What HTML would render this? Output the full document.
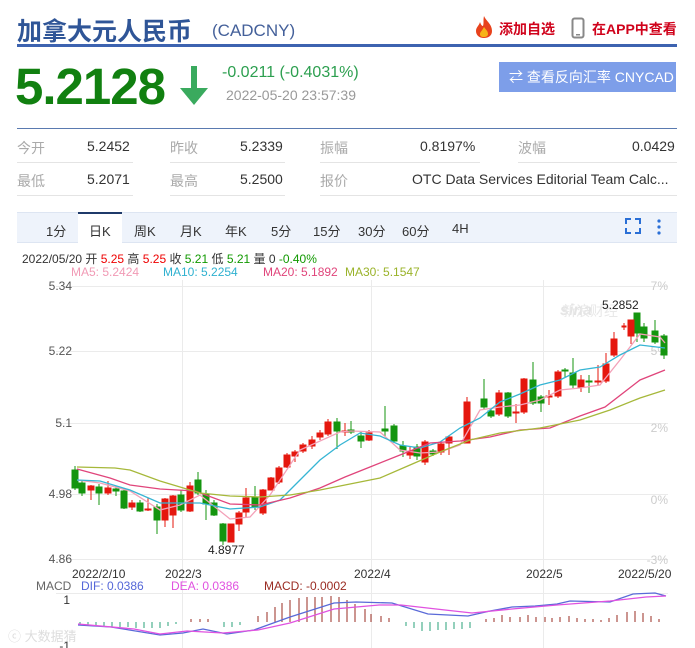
<!DOCTYPE html>
<html><head><meta charset="utf-8"><style>
*{margin:0;padding:0;box-sizing:border-box}
body{width:695px;height:648px;background:#fff;font-family:"Liberation Sans","Noto Sans CJK SC",sans-serif;position:relative;overflow:hidden;color:#333}
.a{position:absolute;white-space:nowrap}
.lb{color:#aaa;font-size:14px}
.v{color:#333;font-size:14px}
.ln{position:absolute;height:1px;background:#e4e4e4}
.tab{position:absolute;top:221px;font-size:13px;color:#333}
</style></head><body>
<div class="a" style="left:17px;top:12px;font-size:25px;font-weight:bold;color:#2f5597">加拿大元人民币</div>
<div class="a" style="left:212px;top:21px;font-size:17px;color:#44609a">(CADCNY)</div>
<svg class="a" style="left:473px;top:15px" width="22" height="24" viewBox="0 0 22 24"><path d="M11 1C13 6 19 9 19 16C19 21 15 23 11 23C6 23 3 20 3 16C3 12 6 11 7 7C8 10 9 11 10 11C11 8 10 5 11 1Z" fill="#e8421c"/><path d="M11 12C13 15 15 16 15 19C15 21 13 22 11 22C8 22 7 21 7 19C7 17 9 16 11 12Z" fill="#f7b318"/></svg>
<div class="a" style="left:499px;top:19px;font-size:14px;color:#d0021b;font-weight:bold">添加自选</div>
<svg class="a" style="left:571px;top:17px" width="14" height="22"><rect x="1.5" y="1.5" width="11" height="19" rx="2" fill="none" stroke="#888" stroke-width="2"/><rect x="5" y="17" width="4" height="1.5" fill="#888"/></svg>
<div class="a" style="left:592px;top:19px;font-size:14px;color:#d0021b;font-weight:bold">在APP中查看</div>
<div class="a" style="left:17px;top:44px;width:660px;height:3px;background:#3d63b0"></div>
<div class="a" style="left:15px;top:57px;font-size:51px;font-weight:bold;color:#118010;letter-spacing:-1px">5.2128</div>
<svg class="a" style="left:180px;top:66px" width="28" height="40"><rect x="11" y="0" width="6" height="26" fill="#3aaa5e"/><path d="M0 22L28 22L14 39Z" fill="#3aaa5e"/></svg>
<div class="a" style="left:222px;top:64px;font-size:16px;color:#2c9f4f">-0.0211 (-0.4031%)</div>
<div class="a" style="left:226px;top:87px;font-size:14px;color:#999">2022-05-20 23:57:39</div>
<div class="a" style="left:499px;top:62px;width:177px;height:30px;background:#7d9ee9;color:#fff;font-size:14px;line-height:30px;padding-left:10px">⇄ 查看反向汇率 CNYCAD</div>
<div class="a" style="left:17px;top:128px;width:660px;height:1px;background:#5a7ab0"></div>
<div class="a lb" style="left:17px;top:138px">今开</div><div class="a v" style="left:87px;top:138px">5.2452</div>
<div class="a lb" style="left:170px;top:138px">昨收</div><div class="a v" style="left:240px;top:138px">5.2339</div>
<div class="a lb" style="left:320px;top:138px">振幅</div><div class="a v" style="left:420px;top:138px">0.8197%</div>
<div class="a lb" style="left:518px;top:138px">波幅</div><div class="a v" style="left:632px;top:138px">0.0429</div>
<div class="a lb" style="left:17px;top:171px">最低</div><div class="a v" style="left:87px;top:171px">5.2071</div>
<div class="a lb" style="left:170px;top:171px">最高</div><div class="a v" style="left:240px;top:171px">5.2500</div>
<div class="a lb" style="left:320px;top:171px">报价</div><div class="a v" style="left:412px;top:171px">OTC Data Services Editorial Team Calc...</div>
<div class="ln" style="left:17px;top:162px;width:116px"></div><div class="ln" style="left:170px;top:162px;width:115px"></div><div class="ln" style="left:320px;top:162px;width:160px"></div><div class="ln" style="left:518px;top:162px;width:159px"></div>
<div class="ln" style="left:17px;top:195px;width:116px"></div><div class="ln" style="left:170px;top:195px;width:115px"></div><div class="ln" style="left:320px;top:195px;width:357px"></div>
<div class="a" style="left:17px;top:212px;width:660px;height:31px;background:#eef3fb;border-top:1px solid #dde5f2;border-bottom:1px solid #dde5f2"></div>
<div class="a" style="left:78px;top:212px;width:44px;height:31px;background:#fff;border-top:2px solid #1f3a6a"></div>
<div class="tab" style="left:46px">1分</div><div class="tab" style="left:89px">日K</div><div class="tab" style="left:134px">周K</div><div class="tab" style="left:180px">月K</div><div class="tab" style="left:225px">年K</div><div class="tab" style="left:271px">5分</div><div class="tab" style="left:313px">15分</div><div class="tab" style="left:358px">30分</div><div class="tab" style="left:402px">60分</div><div class="tab" style="left:452px">4H</div>
<svg class="a" style="left:625px;top:218px" width="40" height="18"><path d="M1 6V1H6M10 1H15V6M15 10V15H10M6 15H1V10" fill="none" stroke="#2a6fd6" stroke-width="2"/><circle cx="34" cy="3" r="1.6" fill="#2a6fd6"/><circle cx="34" cy="9" r="1.6" fill="#2a6fd6"/><circle cx="34" cy="15" r="1.6" fill="#2a6fd6"/></svg>
<div class="a" style="left:22px;top:250px;font-size:12px;color:#333">2022/05/20 开 <span style="color:#e00">5.25</span> 高 <span style="color:#e00">5.25</span> 收 <span style="color:#190">5.21</span> 低 <span style="color:#190">5.21</span> 量 0 <span style="color:#190">-0.40%</span></div>
<div class="a" style="left:71px;top:265px;font-size:12px;color:#f19ab5">MA5: 5.2424</div>
<div class="a" style="left:163px;top:265px;font-size:12px;color:#2fb1d0">MA10: 5.2254</div>
<div class="a" style="left:263px;top:265px;font-size:12px;color:#e0457b">MA20: 5.1892</div>
<div class="a" style="left:345px;top:265px;font-size:12px;color:#9ab32a">MA30: 5.1547</div>
<svg class="a" style="left:0;top:0" width="695" height="648" font-family="Liberation Sans, sans-serif">
<g stroke="#ebebeb" stroke-width="1">
<line x1="56" y1="286.5" x2="668" y2="286.5"/><line x1="56" y1="351.5" x2="668" y2="351.5"/><line x1="56" y1="423.5" x2="668" y2="423.5"/><line x1="56" y1="494.5" x2="668" y2="494.5"/><line x1="56" y1="559.5" x2="668" y2="559.5"/>
<line x1="182.5" y1="280" x2="182.5" y2="648"/><line x1="371.5" y1="280" x2="371.5" y2="648"/><line x1="543.5" y1="280" x2="543.5" y2="648"/>
<line x1="56" y1="593.5" x2="668" y2="593.5"/>
</g>
<g font-size="12" fill="#555" text-anchor="end"><text x="72" y="290">5.34</text><text x="72" y="355">5.22</text><text x="72" y="427">5.1</text><text x="72" y="498">4.98</text><text x="72" y="563">4.86</text></g>
<g font-size="12" fill="#ccc" text-anchor="end"><text x="668" y="290">7%</text><text x="668" y="355">5%</text><text x="668" y="432">2%</text><text x="668" y="504">0%</text><text x="668" y="564">-3%</text></g>
<text x="560" y="315" font-size="16" font-style="italic" font-weight="bold" fill="#e4e4e4">sina</text><text x="562" y="316" font-size="14" fill="#e8e8e8">新浪财经</text>
<text x="208" y="554" font-size="12" fill="#222">4.8977</text><text x="602" y="309" font-size="12" fill="#222">5.2852</text>
<g fill="#14950f" stroke="#14950f"><line x1="75" y1="466" x2="75" y2="490"/><rect x="72" y="470" width="6" height="18"/><line x1="82" y1="480" x2="82" y2="496"/><rect x="79" y="483" width="6" height="10"/><line x1="99" y1="484" x2="99" y2="505"/><rect x="96" y="487" width="6" height="6"/><line x1="116" y1="486" x2="116" y2="496"/><rect x="113" y="489" width="6" height="2"/><line x1="124" y1="488" x2="124" y2="509"/><rect x="121" y="491" width="6" height="17"/><line x1="140" y1="500" x2="140" y2="512"/><rect x="137" y="503" width="6" height="8"/><line x1="157" y1="504" x2="157" y2="534"/><rect x="154" y="507" width="6" height="13"/><line x1="181" y1="490" x2="181" y2="512"/><rect x="178" y="495" width="6" height="15"/><line x1="198" y1="472" x2="198" y2="495"/><rect x="195" y="480" width="6" height="13"/><line x1="206" y1="490" x2="206" y2="520"/><rect x="203" y="494" width="6" height="10"/><line x1="214" y1="500" x2="214" y2="516"/><rect x="211" y="503" width="6" height="12"/><line x1="223" y1="523" x2="223" y2="545"/><rect x="220" y="524" width="6" height="17"/><line x1="255" y1="486" x2="255" y2="510"/><rect x="252" y="497" width="6" height="10"/><line x1="337" y1="418" x2="337" y2="449"/><rect x="334" y="422" width="6" height="9"/><line x1="351" y1="421" x2="351" y2="434"/><rect x="348" y="430" width="6" height="2"/><line x1="361" y1="432" x2="361" y2="448"/><rect x="358" y="436" width="6" height="5"/><line x1="385" y1="406" x2="385" y2="436"/><rect x="382" y="429" width="6" height="2"/><line x1="394" y1="424" x2="394" y2="443"/><rect x="391" y="426" width="6" height="15"/><line x1="403" y1="441" x2="403" y2="457"/><rect x="400" y="446" width="6" height="5"/><line x1="417" y1="444" x2="417" y2="460"/><rect x="414" y="447" width="6" height="9"/><line x1="433" y1="449" x2="433" y2="456"/><rect x="430" y="451" width="6" height="3"/><line x1="484" y1="379" x2="484" y2="409"/><rect x="481" y="399" width="6" height="8"/><line x1="491" y1="408" x2="491" y2="418"/><rect x="488" y="411" width="6" height="5"/><line x1="508" y1="392" x2="508" y2="418"/><rect x="505" y="393" width="6" height="23"/><line x1="533" y1="362" x2="533" y2="405"/><rect x="530" y="380" width="6" height="23"/><line x1="541" y1="395" x2="541" y2="412"/><rect x="538" y="397" width="6" height="6"/><line x1="565" y1="368" x2="565" y2="378"/><rect x="562" y="370" width="6" height="1"/><line x1="573" y1="358" x2="573" y2="388"/><rect x="570" y="373" width="6" height="12"/><line x1="589" y1="375" x2="589" y2="393"/><rect x="586" y="381" width="6" height="1"/><line x1="637" y1="313" x2="637" y2="342"/><rect x="634" y="313" width="6" height="20"/><line x1="644" y1="323" x2="644" y2="342"/><rect x="641" y="327" width="6" height="11"/><line x1="655" y1="320" x2="655" y2="344"/><rect x="652" y="331" width="6" height="11"/><line x1="664" y1="334" x2="664" y2="359"/><rect x="661" y="336" width="6" height="19"/></g>
<g fill="#e5170e" stroke="#e5170e"><line x1="91" y1="485" x2="91" y2="500"/><rect x="88" y="486" width="6" height="4"/><line x1="108" y1="481" x2="108" y2="495"/><rect x="105" y="488" width="6" height="5"/><line x1="132" y1="500" x2="132" y2="510"/><rect x="129" y="503" width="6" height="4"/><line x1="148" y1="498" x2="148" y2="511"/><rect x="145" y="509" width="6" height="1"/><line x1="165" y1="498" x2="165" y2="527"/><rect x="162" y="499" width="6" height="21"/><line x1="173" y1="495" x2="173" y2="528"/><rect x="170" y="496" width="6" height="19"/><line x1="190" y1="482" x2="190" y2="512"/><rect x="187" y="486" width="6" height="25"/><line x1="231" y1="524" x2="231" y2="542"/><rect x="228" y="524" width="6" height="18"/><line x1="239" y1="511" x2="239" y2="531"/><rect x="236" y="513" width="6" height="11"/><line x1="246" y1="488" x2="246" y2="518"/><rect x="243" y="498" width="6" height="14"/><line x1="263" y1="489" x2="263" y2="515"/><rect x="260" y="490" width="6" height="23"/><line x1="271" y1="477" x2="271" y2="490"/><rect x="268" y="478" width="6" height="12"/><line x1="279" y1="466" x2="279" y2="484"/><rect x="276" y="468" width="6" height="14"/><line x1="287" y1="453" x2="287" y2="468"/><rect x="284" y="455" width="6" height="12"/><line x1="295" y1="450" x2="295" y2="462"/><rect x="292" y="452" width="6" height="4"/><line x1="303" y1="443" x2="303" y2="453"/><rect x="300" y="445" width="6" height="6"/><line x1="312" y1="436" x2="312" y2="449"/><rect x="309" y="440" width="6" height="6"/><line x1="320" y1="430" x2="320" y2="440"/><rect x="317" y="433" width="6" height="4"/><line x1="328" y1="419" x2="328" y2="436"/><rect x="325" y="422" width="6" height="12"/><line x1="345" y1="423" x2="345" y2="436"/><rect x="342" y="431" width="6" height="1"/><line x1="369" y1="430" x2="369" y2="441"/><rect x="366" y="433" width="6" height="7"/><line x1="410" y1="446" x2="410" y2="459"/><rect x="407" y="451" width="6" height="4"/><line x1="425" y1="440" x2="425" y2="465"/><rect x="422" y="442" width="6" height="20"/><line x1="441" y1="441" x2="441" y2="455"/><rect x="438" y="444" width="6" height="8"/><line x1="449" y1="436" x2="449" y2="455"/><rect x="446" y="437" width="6" height="6"/><line x1="467" y1="397" x2="467" y2="443"/><rect x="464" y="402" width="6" height="41"/><line x1="499" y1="390" x2="499" y2="416"/><rect x="496" y="393" width="6" height="21"/><line x1="516" y1="404" x2="516" y2="423"/><rect x="513" y="412" width="6" height="1"/><line x1="524" y1="378" x2="524" y2="414"/><rect x="521" y="379" width="6" height="33"/><line x1="549" y1="390" x2="549" y2="405"/><rect x="546" y="396" width="6" height="1"/><line x1="558" y1="370" x2="558" y2="398"/><rect x="555" y="372" width="6" height="24"/><line x1="581" y1="375" x2="581" y2="392"/><rect x="578" y="380" width="6" height="7"/><line x1="598" y1="365" x2="598" y2="385"/><rect x="595" y="381" width="6" height="1"/><line x1="606" y1="353" x2="606" y2="383"/><rect x="603" y="364" width="6" height="17"/><line x1="614" y1="332" x2="614" y2="357"/><rect x="611" y="339" width="6" height="16"/><line x1="624" y1="323" x2="624" y2="330"/><rect x="622" y="326" width="4" height="1"/><line x1="631" y1="320" x2="631" y2="344"/><rect x="628" y="320" width="6" height="16"/></g>
<g fill="none" stroke-width="1.3">
<polyline stroke="#f3a1b8" points="77,480 100,483 130,491 160,510 180,505 200,495 230,519 250,517 270,495 300,450 340,432 351,431 380,432 400,450 420,453 440,452 460,445 480,410 500,407 520,405 540,400 560,390 580,388 600,385 620,360 640,334 660,337 665,343"/>
<polyline stroke="#36b5d4" points="77,480 100,481 130,490 160,503 200,503 230,509 260,507 280,500 300,480 320,460 340,445 360,433 380,436 400,445 420,448 440,442 460,428 480,418 500,402 520,394 540,385 560,380 580,370 600,367 620,355 640,345 665,348"/>
<polyline stroke="#e0457b" points="77,469 110,478 130,485 160,489 195,491 230,504 260,505 290,498 320,488 345,477 370,467 400,455 430,443 460,441 490,437 520,430 550,428 580,416 605,407 640,380 665,370"/>
<polyline stroke="#a6b83a" points="77,467 115,468 130,470 160,481 200,493 230,496 260,497 290,495 320,490 345,485 380,478 410,465 440,452 470,440 500,433 540,428 580,420 610,410 640,398 665,390"/>
</g>
<g font-size="12" fill="#333"><text x="72" y="578">2022/2/10</text><text x="165" y="578">2022/3</text><text x="354" y="578">2022/4</text><text x="526" y="578">2022/5</text><text x="618" y="578">2022/5/20</text></g>
<g font-size="12"><text x="36" y="590" fill="#666">MACD</text><text x="81" y="590" fill="#5567d8">DIF: 0.0386</text><text x="171" y="590" fill="#e052e0">DEA: 0.0386</text><text x="264" y="590" fill="#9a2b22">MACD: -0.0002</text></g>
<text x="70" y="604" font-size="12" fill="#333" text-anchor="end">1</text><text x="70" y="650" font-size="12" fill="#333" text-anchor="end">-1</text>
<g stroke="#9a2b22" stroke-width="1"><path d="M191 622v-3M200 622v-3M208 622v-3M258 622v-6M267 622v-10M275 622v-15M282 622v-19M290 622v-22M299 622v-24M307 622v-25M315 622v-25M322 622v-25M331 622v-26M339 622v-25M347 622v-22M355 622v-18M365 622v-13M371 622v-8M381 622v-6M389 622v-4M486 622v-3M494 622v-4M502 622v-7M510 622v-5M520 622v-5M528 622v-7M536 622v-5M545 622v-5M552 622v-4M560 622v-5M569 622v-6M577 622v-4M585 622v-3M593 622v-3M601 622v-2M609 622v-4M617 622v-7M627 622v-10M635 622v-11M643 622v-9M651 622v-6M659 622v-3"/></g>
<g stroke="#2aa07a" stroke-width="1"><path d="M80 622v3M88 622v4M96 622v4M104 622v4M112 622v5M120 622v5M128 622v5M136 622v6M144 622v6M152 622v6M160 622v6M168 622v4M176 622v2M224 622v5M232 622v5M240 622v3M406 622v4M414 622v6M422 622v9M430 622v9M438 622v8M446 622v8M454 622v7M462 622v7M470 622v6"/></g>
<polyline fill="none" stroke="#5a6ad8" stroke-width="1.3" points="78,625 111,627 160,635 183,633 203,629 227,634 254,630 290,617 334,603 356,602 392,603 428,614 468,616 490,611 512,607 535,606 557,604 570,601 610,602 633,594 655,593 666,596"/>
<polyline fill="none" stroke="#e052e0" stroke-width="1.3" points="78,624 134,629 160,634 187,631 223,633 258,630 290,623 334,609 379,605 401,605 445,610 472,613 512,609 557,605 610,601 646,597 666,596"/>
</svg>
<div class="a" style="left:8px;top:626px;font-size:13px;color:#ddd">ⓒ 大数据猜</div>
</body></html>
